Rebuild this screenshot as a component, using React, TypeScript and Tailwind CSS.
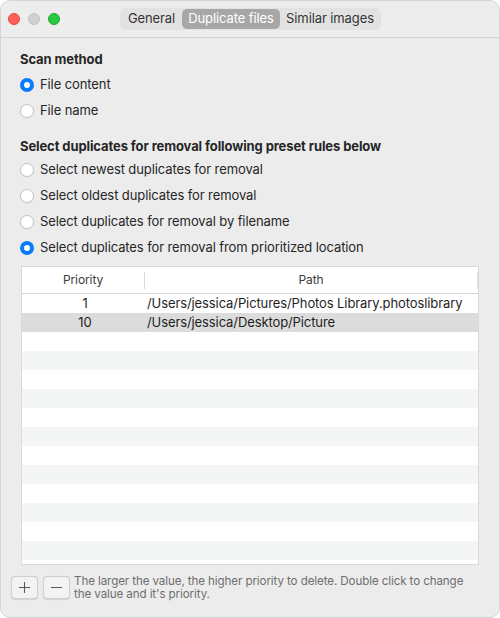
import React from "react";

function Radio({ checked, label }: { checked?: boolean; label: string }) {
  return (
    <div className="flex items-center h-[26px] gap-[6px]">
      {checked ? (
        <div className="w-[14px] h-[14px] rounded-full bg-[#0a7aff] flex items-center justify-center">
          <div className="w-[6px] h-[6px] rounded-full bg-white" />
        </div>
      ) : (
        <div className="w-[14px] h-[14px] rounded-full bg-white border border-[#c6c6c6] shadow-[0_0.5px_1px_rgba(0,0,0,0.08)]" />
      )}
      <span className="text-[13px] text-[#262626]">{label}</span>
    </div>
  );
}

export default function App() {
  const rows = [
    { p: "1", path: "/Users/jessica/Pictures/Photos Library.photoslibrary" },
    { p: "10", path: "/Users/jessica/Desktop/Picture" },
  ];
  const total = 15;
  return (
    <div className="w-[500px] h-[618px] bg-white tracking-[-0.1px]" style={{ fontFamily: "Inter, 'Noto Sans', sans-serif" }}>
      <div className="w-[500px] h-[618px] rounded-[10px] overflow-hidden bg-[#ececec] flex flex-col border border-[#d4d4d4]">
        {/* title bar */}
        <div className="h-[37px] shrink-0 flex items-center relative border-b border-[#d2d2d2] bg-[#ededed]">
          <div className="flex items-center gap-[8px] pl-[7px]">
            <div className="w-[12px] h-[12px] rounded-full bg-[#fe5f57] border border-[#e2463f]" />
            <div className="w-[12px] h-[12px] rounded-full bg-[#d0d0d0] border border-[#c2c2c2]" />
            <div className="w-[12px] h-[12px] rounded-full bg-[#28c840] border border-[#1daa2c]" />
          </div>
          <div className="absolute left-[119px] top-[7px] h-[22px] w-[261px] rounded-[6px] bg-[#e2e2e2] flex items-center px-[1px] text-[13px] text-[#353535]">
            <div className="w-[61px] text-center">General</div>
            <div className="w-[98px] h-[20px] rounded-[5px] bg-[#a7a7a7] text-white flex items-center justify-center">Duplicate files</div>
            <div className="flex-1 text-center">Similar images</div>
          </div>
        </div>
        {/* content */}
        <div className="flex-1 flex flex-col px-[19px] pt-[12px]">
          <div className="text-[13px] font-bold text-[#262626] h-[20px] flex items-center">Scan method</div>
          <div className="mt-[2px]">
            <Radio checked label="File content" />
            <Radio label="File name" />
          </div>
          <div className="text-[13px] font-bold text-[#262626] h-[20px] flex items-center mt-[13px]">
            Select duplicates for removal following preset rules below
          </div>
          <div>
            <Radio label="Select newest duplicates for removal" />
            <Radio label="Select oldest duplicates for removal" />
            <Radio label="Select duplicates for removal by filename" />
            <Radio checked label="Select duplicates for removal from prioritized location" />
          </div>
          {/* table */}
          <div className="mt-[5px] ml-[1px] w-[458px] h-[299px] bg-white border border-[#dadada] flex flex-col overflow-hidden">
            <div className="h-[27px] shrink-0 flex items-center border-b border-[#d6d6d6] text-[12px] text-[#3c3c3c]">
              <div className="w-[122px] text-center">Priority</div>
              <div className="w-px h-[17px] bg-[#dcdcdc]" />
              <div className="flex-1 text-center">Path</div>
              <div className="w-px h-[17px] bg-[#dcdcdc]" />
            </div>
            <div className="flex flex-col">
              {Array.from({ length: total }).map((_, i) => {
                const r = rows[i];
                const bg = i === 1 ? "bg-[#dcdcdc]" : i % 2 === 1 ? "bg-[#f4f5f5]" : "bg-white";
                return (
                  <div key={i} className={`h-[19px] shrink-0 flex items-center text-[13px] text-[#1f1f1f] ${bg}`}>
                    <div className="w-[122px] text-center pl-[4px]">{r ? r.p : ""}</div>
                    <div className="pl-[3px] whitespace-nowrap">{r ? r.path : ""}</div>
                  </div>
                );
              })}
            </div>
          </div>
          {/* bottom */}
          <div className="flex items-start mt-[11px] -ml-[9px] gap-[5px]">
            <div className="w-[27px] h-[23px] rounded-[4px] bg-[#f3f3f3] border border-[#cfcfcf] shadow-[0_0.5px_1px_rgba(0,0,0,0.1)] flex items-center justify-center">
              <svg width="13" height="13" viewBox="0 0 13 13"><path d="M6.5 1v11M1 6.5h11" stroke="#5a5a5a" strokeWidth="1.1" /></svg>
            </div>
            <div className="w-[27px] h-[23px] rounded-[4px] bg-[#f3f3f3] border border-[#cfcfcf] shadow-[0_0.5px_1px_rgba(0,0,0,0.1)] flex items-center justify-center">
              <svg width="13" height="13" viewBox="0 0 13 13"><path d="M1 6.5h11" stroke="#5a5a5a" strokeWidth="1.1" /></svg>
            </div>
            <div className="text-[11.6px] leading-[13px] text-[#6e6e6e] -mt-[1px] -ml-[1px] tracking-[-0.1px] whitespace-nowrap">
              The larger the value, the higher priority to delete. Double click to change
              <br />
              the value and it's priority.
            </div>
          </div>
        </div>
      </div>
    </div>
  );
}
